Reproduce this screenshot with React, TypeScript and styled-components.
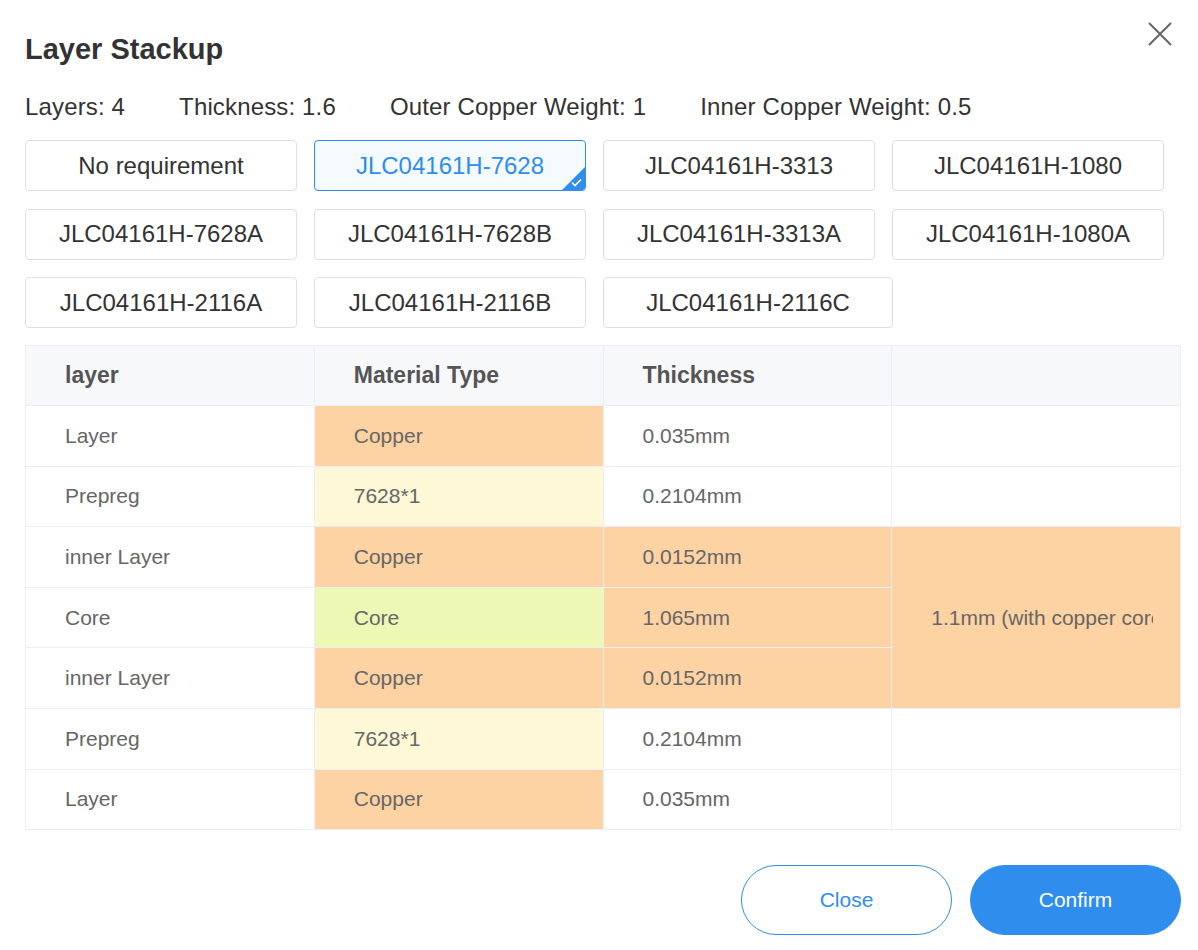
import React, { useState } from 'react';
import styled, { createGlobalStyle, css } from 'styled-components';

const GlobalStyle = createGlobalStyle`
  html, body {
    margin: 0;
    padding: 0;
    background: #fff;
  }
  body {
    font-family: "Liberation Sans", Arial, sans-serif;
    color: #333;
  }
`;

const Dialog = styled.div`
  width: 1198px;
  box-sizing: border-box;
  padding: 0 17px 0 25px;
`;

const Header = styled.div`
  display: flex;
  justify-content: space-between;
  align-items: flex-start;
`;

const Title = styled.h2`
  margin: 29px 0 0;
  font-size: 29px;
  line-height: 40px;
  font-weight: 700;
  color: #333;
`;

const CloseIcon = styled.button`
  margin: 21px 8px 0 0;
  padding: 0;
  width: 26px;
  height: 26px;
  border: none;
  background: none;
  cursor: pointer;
  display: flex;
`;

const Info = styled.div`
  display: flex;
  gap: 54px;
  margin-top: 20px;
  font-size: 24px;
  letter-spacing: 0.15px;
  line-height: 36px;
  color: #333;
`;

const Options = styled.div`
  display: grid;
  grid-template-columns: repeat(4, minmax(0, 1fr));
  column-gap: 17px;
  row-gap: 17.5px;
  width: 1139px;
  margin-top: 15px;
`;

const Option = styled.button<{ $active?: boolean; $wide?: boolean }>`
  position: relative;
  height: 51px;
  width: ${(p) => (p.$wide ? '290px' : '100%')};
  box-sizing: border-box;
  border: 1px solid #dcdfe6;
  border-radius: 4px;
  background: #fff;
  font-family: "Liberation Sans", Arial, sans-serif;
  font-size: 24px;
  color: #333;
  cursor: pointer;
  overflow: hidden;
  padding: 0;
  ${(p) =>
    p.$active &&
    css`
      border-color: #2e8ded;
      background: #f5faff;
      color: #2e8ded;
      &::after {
        content: '';
        position: absolute;
        right: 0;
        bottom: 0;
        width: 0;
        height: 0;
        border-left: 23px solid transparent;
        border-bottom: 23px solid #2e8ded;
      }
    `}
`;

const Check = styled.svg`
  position: absolute;
  right: 3px;
  bottom: 3px;
  z-index: 1;
`;

const Table = styled.table`
  width: 1156px;
  margin-top: 17px;
  border-collapse: collapse;
  table-layout: fixed;
  font-size: 21px;
  color: #666;
`;

const Th = styled.th`
  height: 59px;
  padding: 0 39px;
  text-align: left;
  background: #f7f8fa;
  border: 1px solid #ebeef5;
  font-size: 23px;
  font-weight: 700;
  color: #555;
`;

const fills: Record<string, string> = {
  copper: '#fed3a3',
  prepreg: '#fff8d6',
  core: '#edf8b4',
  none: '#fff',
};

const Td = styled.td<{ $fill?: string }>`
  height: 59.6px;
  padding: 0 39px;
  border: 1px solid #ebeef5;
  background: ${(p) => fills[p.$fill || 'none']};
  vertical-align: middle;
`;

const Clipped = styled.div`
  width: 222px;
  overflow: hidden;
  white-space: nowrap;
`;

const Footer = styled.div`
  display: flex;
  justify-content: flex-end;
  gap: 18px;
  margin-top: 35px;
`;

const ActionButton = styled.button<{ $primary?: boolean }>`
  width: 211px;
  height: 70px;
  border-radius: 35px;
  border: 1px solid #2e8ded;
  font-family: "Liberation Sans", Arial, sans-serif;
  font-size: 21px;
  cursor: pointer;
  background: ${(p) => (p.$primary ? '#2e8ded' : '#fff')};
  color: ${(p) => (p.$primary ? '#fff' : '#2e8ded')};
`;

const options = [
  'No requirement',
  'JLC04161H-7628',
  'JLC04161H-3313',
  'JLC04161H-1080',
  'JLC04161H-7628A',
  'JLC04161H-7628B',
  'JLC04161H-3313A',
  'JLC04161H-1080A',
  'JLC04161H-2116A',
  'JLC04161H-2116B',
  'JLC04161H-2116C',
];

const rows = [
  { layer: 'Layer', material: 'Copper', fill: 'copper', thickness: '0.035mm', hl: false },
  { layer: 'Prepreg', material: '7628*1', fill: 'prepreg', thickness: '0.2104mm', hl: false },
  { layer: 'inner Layer', material: 'Copper', fill: 'copper', thickness: '0.0152mm', hl: true },
  { layer: 'Core', material: 'Core', fill: 'core', thickness: '1.065mm', hl: true },
  { layer: 'inner Layer', material: 'Copper', fill: 'copper', thickness: '0.0152mm', hl: true },
  { layer: 'Prepreg', material: '7628*1', fill: 'prepreg', thickness: '0.2104mm', hl: false },
  { layer: 'Layer', material: 'Copper', fill: 'copper', thickness: '0.035mm', hl: false },
];

export default function App() {
  const [selected, setSelected] = useState('JLC04161H-7628');

  return (
    <Dialog>
      <GlobalStyle />
      <Header>
        <Title>Layer Stackup</Title>
        <CloseIcon aria-label="close">
          <svg width="26" height="26" viewBox="0 0 26 26">
            <path d="M2 2 L24 24 M24 2 L2 24" stroke="#666" strokeWidth="2" fill="none" />
          </svg>
        </CloseIcon>
      </Header>
      <Info>
        <span>Layers: 4</span>
        <span>Thickness: 1.6</span>
        <span>Outer Copper Weight: 1</span>
        <span>Inner Copper Weight: 0.5</span>
      </Info>
      <Options>
        {options.map((o, i) => (
          <Option
            key={o}
            $active={o === selected}
            $wide={i === options.length - 1}
            onClick={() => setSelected(o)}
          >
            {o}
            {o === selected && (
              <Check width="11" height="9" viewBox="0 0 11 9">
                <path d="M1 4.5 L4 7.5 L10 1.5" stroke="#fff" strokeWidth="1.6" fill="none" />
              </Check>
            )}
          </Option>
        ))}
      </Options>
      <Table>
        <thead>
          <tr>
            <Th>layer</Th>
            <Th>Material Type</Th>
            <Th>Thickness</Th>
            <Th />
          </tr>
        </thead>
        <tbody>
          {rows.map((r, i) => (
            <tr key={i}>
              <Td>{r.layer}</Td>
              <Td $fill={r.fill}>{r.material}</Td>
              <Td $fill={r.hl ? 'copper' : 'none'}>{r.thickness}</Td>
              {i === 2 && (
                <Td $fill="copper" rowSpan={3}>
                  <Clipped>1.1mm (with copper core)</Clipped>
                </Td>
              )}
              {!r.hl && <Td />}
            </tr>
          ))}
        </tbody>
      </Table>
      <Footer>
        <ActionButton>Close</ActionButton>
        <ActionButton $primary>Confirm</ActionButton>
      </Footer>
    </Dialog>
  );
}
